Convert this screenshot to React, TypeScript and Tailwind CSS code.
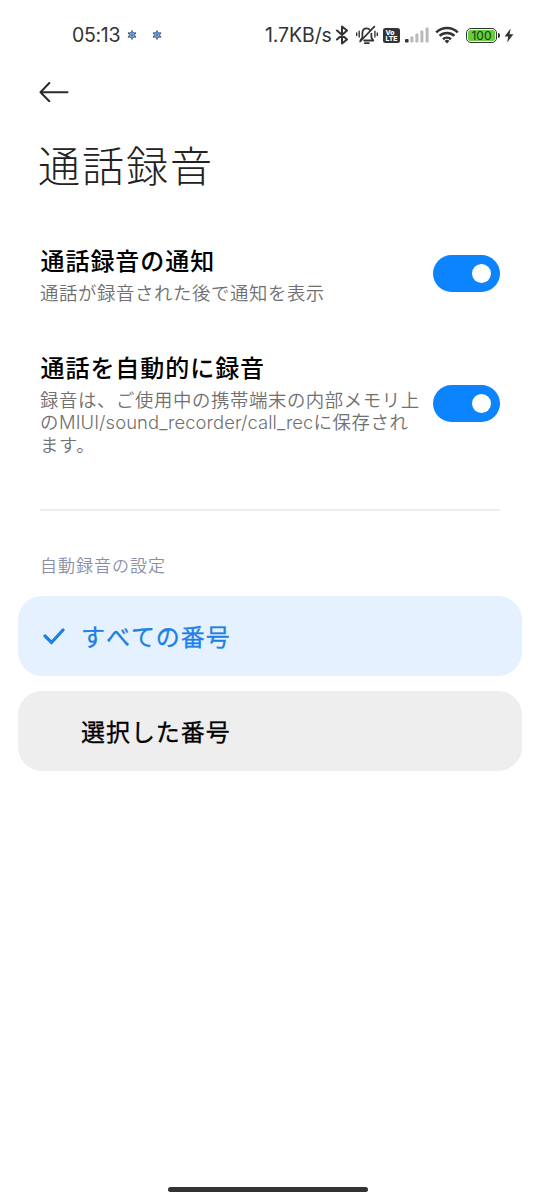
import type { ReactNode } from "react";

const JP = "font-['Noto_Sans_CJK_JP',sans-serif]";

// ── Status bar icons ─────────────────────────────────────────────────────────

function GearIcon() {
  return (
    <svg width="10" height="10" viewBox="0 0 10 10">
      <g stroke="#40546c" strokeWidth="1.5" strokeLinecap="round">
        <path d="M5 1v8M1.5 3l7 4M1.5 7l7-4" />
      </g>
      <circle cx="5" cy="5" r="3" fill="#6b9fd6" stroke="#4c6f98" strokeWidth=".8" />
      <circle cx="5" cy="5" r="1" fill="#4f78ab" />
    </svg>
  );
}

function BluetoothIcon() {
  return (
    <svg width="14" height="20" viewBox="0 0 14 20" fill="none" stroke="#333" strokeWidth="2" strokeLinejoin="round" strokeLinecap="round">
      <path d="M2 5.5l10 9L7 18.6V1.4l5 4.1-10 9" />
    </svg>
  );
}

function MuteIcon() {
  return (
    <svg width="24" height="20" viewBox="0 0 24 20" fill="none" stroke="#333" strokeWidth="1.8" strokeLinecap="round" strokeLinejoin="round">
      <path d="M5.5 15.2l1.9-2.6V8.2c0-3 1.8-4.8 4.2-4.8 1.3 0 2.4.5 3.1 1.3M16.4 8.6v4l1.9 2.9H9.2" />
      <path d="M19.3 1.6L5.2 16.5" />
      <path d="M9.8 18.2h4" />
      <path d="M4.2 6.3v5.8M19.9 6.3v5.8" strokeWidth="1.4" />
      <path d="M1.7 7.9v2.7M22.3 7.9v2.7" strokeWidth="1.4" />
    </svg>
  );
}

function VolteBadge() {
  return (
    <svg width="17" height="15" viewBox="0 0 17 15" className="font-['Inter',sans-serif] font-extrabold">
      <rect width="17" height="15" rx="2.5" fill="#333" />
      <text x="2.5" y="7" fontSize="6.8" fill="#fff">Vo</text>
      <text x="2.5" y="13.3" fontSize="6.8" fill="#fff" textLength="12">LTE</text>
    </svg>
  );
}

function SignalIcon() {
  return (
    <svg width="24" height="16" viewBox="0 0 24 16">
      <rect x="0" y="12" width="3.6" height="3.6" rx="1" fill="#333" />
      <g fill="#b9b9b9">
        <rect x="5.4" y="9.4" width="3" height="6.2" rx=".8" />
        <rect x="10.4" y="6.6" width="3" height="9" rx=".8" />
        <rect x="15.4" y="3.6" width="3" height="12" rx=".8" />
        <rect x="20.6" y="0.6" width="3" height="15" rx=".8" />
      </g>
    </svg>
  );
}

function WifiIcon() {
  return (
    <svg width="24" height="18" viewBox="0 0 24 18" fill="none" stroke="#333" strokeWidth="2.5">
      <path d="M1.2 6.4a15.6 15.6 0 0 1 21.6 0" />
      <path d="M4.6 9.9a10.8 10.8 0 0 1 14.8 0" />
      <path d="M8 13.2a6 6 0 0 1 8 0" />
      <path d="M9.6 15a3.4 3.4 0 0 1 4.8 0L12 17.6z" fill="#333" stroke="none" />
    </svg>
  );
}

function Battery() {
  return (
    <div className="flex items-center gap-px">
      <div className="flex h-[15px] w-[31px] rounded-[5px] border-[1.5px] border-[#333] p-px">
        <div className="flex flex-1 items-center justify-center rounded-[2.5px] bg-[#66cd3c] pt-px font-['Inter',sans-serif] text-[12px] leading-none text-[#173b0c]">
          100
        </div>
      </div>
      <div className="h-[5px] w-[2px] rounded-r-sm bg-[#333]" />
    </div>
  );
}

function BoltIcon() {
  return (
    <svg width="10" height="15" viewBox="0 0 10 15" fill="#333">
      <path d="M6.6.5L.6 8.4h3.6l-1 6L9.4 6.3H5.6z" />
    </svg>
  );
}

function StatusBar() {
  return (
    <div className="flex h-[70px] items-center pl-[72px] font-['Inter',sans-serif] text-[19.5px] text-[#333]">
      <span className="w-[55px] pt-[2px] tracking-[-0.3px]">05:13</span>
      <GearIcon />
      <span className="ml-[15px]">
        <GearIcon />
      </span>
      <span className="ml-[103px] w-[70px] pt-[2px] tracking-[-0.1px] whitespace-nowrap">1.7KB/s</span>
      <BluetoothIcon />
      <span className="ml-[6px]"><MuteIcon /></span>
      <span className="ml-[4px]"><VolteBadge /></span>
      <span className="ml-[5px]"><SignalIcon /></span>
      <span className="ml-[6px]"><WifiIcon /></span>
      <span className="ml-[7px]"><Battery /></span>
      <span className="ml-[4px]"><BoltIcon /></span>
    </div>
  );
}

// ── Settings ─────────────────────────────────────────────────────────────────

function Toggle() {
  return (
    <button role="switch" aria-checked="true" className="flex h-[37px] w-[67px] shrink-0 items-center justify-end rounded-full bg-[#0d84ff] pr-[9px]">
      <span className="size-[19px] rounded-full bg-white" />
    </button>
  );
}

function SettingRow({ title, children }: { title: string; children: ReactNode }) {
  return (
    <div className="flex items-center justify-between">
      <div>
        <h2 className="h-[37px] pl-[0.5px] text-[24px] leading-[32px] font-medium tracking-[0.95px] text-black">{title}</h2>
        <p className="text-[18.4px] leading-[22px] font-[350] tracking-[0.6px] whitespace-nowrap text-[#707070]">{children}</p>
      </div>
      <Toggle />
    </div>
  );
}

function Option({ label, selected = false }: { label: string; selected?: boolean }) {
  return (
    <div className={`flex h-20 items-center rounded-[24px] pl-[25px] ${selected ? "bg-[#e5f1ff] text-[#1c80e4]" : "bg-[#eee] text-black"}`}>
      <div className="w-[38px]">
        {selected && (
          <svg width="22" height="18" viewBox="0 0 22 18" fill="none" stroke="currentColor" strokeWidth="3.2">
            <path d="M2 9l6.5 6.5L20 3" strokeLinecap="round" />
          </svg>
        )}
      </div>
      <span className="pb-px text-[24px] leading-[34px] font-normal tracking-[0.95px] [-webkit-text-stroke:0.3px_currentColor] [font-kerning:none]">
        {label}
      </span>
    </div>
  );
}

export default function App() {
  return (
    <div className={`flex h-[1200px] w-[540px] flex-col overflow-hidden bg-white ${JP}`}>
      <StatusBar />
      <header className="px-[39px] pt-[12px]">
        <svg width="30" height="20" viewBox="0 0 30 20" fill="none" stroke="#2b2b2b" strokeWidth="2" strokeLinecap="round" strokeLinejoin="round">
          <path d="M28.5 10.3h-27M10.3 1L1.5 10.3l8.8 9" />
        </svg>
        <h1 className="-ml-px mt-[32px] h-[60px] text-[42px] leading-[60px] font-extralight tracking-[2px] text-[#222]">通話録音</h1>
      </header>

      <section className="flex flex-col gap-[48px] px-[40px] pt-[50px]">
        <SettingRow title="通話録音の通知">通話が録音された後で通知を表示</SettingRow>
        <SettingRow title="通話を自動的に録音">
          録音は、ご使用中の携帯端末の内部メモリ上
          <br />
          の<span className="font-['Inter',sans-serif] font-light tracking-[0.09px]">MIUI/sound_recorder/call_rec</span>に保存され
          <br />
          ます。
        </SettingRow>
      </section>

      <div className="mx-[40px] mt-[54px] h-[2px] bg-[#eee]" />

      <section className="px-[18px]">
        <h3 className="mt-[41px] h-[26px] pl-[22px] text-[17px] leading-[26px] font-[350] tracking-[1px] text-[#8a8fa9]">自動録音の設定</h3>
        <div className="mt-[18px] flex flex-col gap-[15px]">
          <Option label="すべての番号" selected />
          <Option label="選択した番号" />
        </div>
      </section>

      <div className="mt-auto mb-[8px] ml-[168px] h-[5px] w-[200px] rounded-full bg-[#333]" />
    </div>
  );
}
